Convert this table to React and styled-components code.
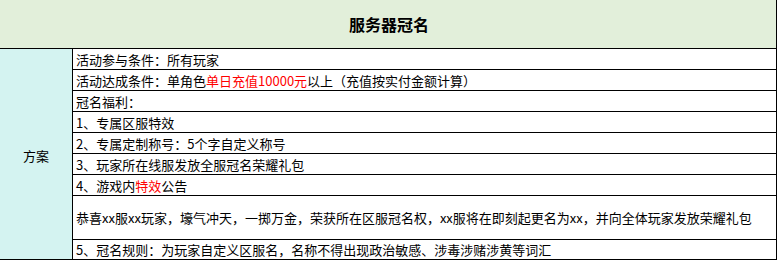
import React from 'react';
import styled, { createGlobalStyle } from 'styled-components';

const GlobalStyle = createGlobalStyle`
  html, body {
    margin: 0;
    padding: 0;
    background: #ffffff;
  }
  body {
    font-family: "Noto Sans CJK SC", "Noto Sans", sans-serif;
    color: #000000;
  }
`;

const Sheet = styled.div`
  width: 776px;
  border-right: 1px solid #000;
  border-bottom: 1px solid #000;
`;

const Title = styled.div`
  height: 48px;
  border-bottom: 1px solid #000;
  background: #e2efda;
  display: flex;
  align-items: center;
  justify-content: center;
  font-size: 16px;
  font-weight: bold;
  padding-left: 2px;
`;

const Body = styled.div`
  display: grid;
  grid-template-columns: 73px 1fr;
`;

const Label = styled.div`
  background: #d4f3f1;
  border-right: 1px solid #000;
  display: flex;
  align-items: center;
  justify-content: center;
  font-size: 13px;
  padding-top: 2px;
`;

const Rows = styled.div`
  display: flex;
  flex-direction: column;
`;

const Row = styled.div`
  height: ${p => p.$h || 20}px;
  border-bottom: ${p => (p.$last ? 'none' : '1px solid #000')};
  display: flex;
  align-items: center;
  padding-left: 3px;
  font-size: 13px;
  white-space: nowrap;
  line-height: 1;
`;

const Red = styled.span`
  color: #ff0000;
`;

export default function App() {
  return (
    <>
      <GlobalStyle />
      <Sheet>
        <Title>服务器冠名</Title>
        <Body>
          <Label>方案</Label>
          <Rows>
            <Row>活动参与条件：所有玩家</Row>
            <Row>
              活动达成条件：单角色<Red>单日充值10000元</Red>以上（充值按实付金额计算）
            </Row>
            <Row>冠名福利：</Row>
            <Row>1、专属区服特效</Row>
            <Row>2、专属定制称号：5个字自定义称号</Row>
            <Row>3、玩家所在线服发放全服冠名荣耀礼包</Row>
            <Row>
              4、游戏内<Red>特效</Red>公告
            </Row>
            <Row $h={43}>
              恭喜xx服xx玩家，壕气冲天，一掷万金，荣获所在区服冠名权，xx服将在即刻起更名为xx，并向全体玩家发放荣耀礼包
            </Row>
            <Row $h={19} $last>
              5、冠名规则：为玩家自定义区服名，名称不得出现政治敏感、涉毒涉赌涉黄等词汇
            </Row>
          </Rows>
        </Body>
      </Sheet>
    </>
  );
}
